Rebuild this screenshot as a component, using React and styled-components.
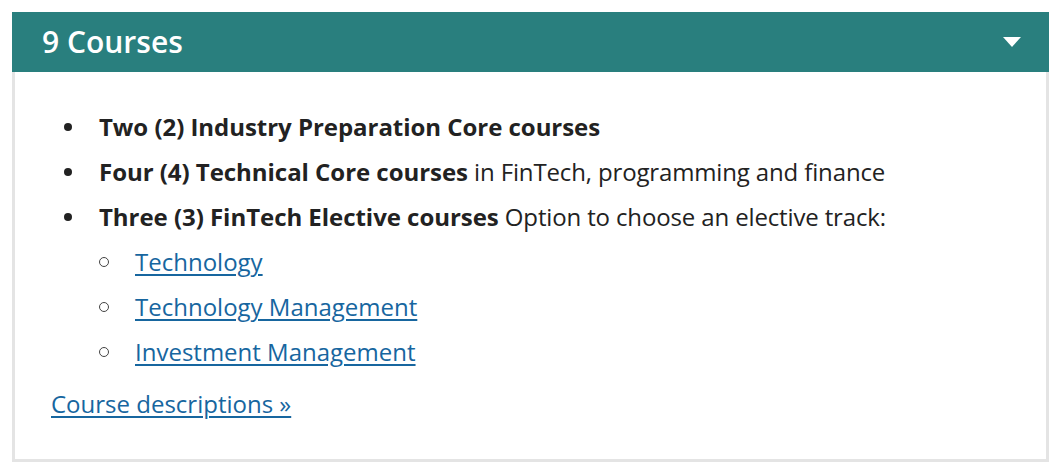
import React from 'react';
import styled, { createGlobalStyle } from 'styled-components';

const GlobalStyle = createGlobalStyle`
  body {
    margin: 0;
    background: #fff;
    font-family: "Open Sans", "Noto Sans", sans-serif;
    color: #222;
  }
`;

const Page = styled.div`
  padding: 12px 7px 0 12px;
`;

const Panel = styled.section`
  width: 1037px;
  box-sizing: border-box;
`;

const Header = styled.div`
  height: 60px;
  background: #297f7e;
  display: flex;
  align-items: center;
  justify-content: space-between;
  padding: 0 28px 0 30px;
  box-sizing: border-box;
`;

const Title = styled.h2`
  margin: 0;
  color: #fff;
  font-size: 30px;
  font-weight: 600;
  line-height: 1;
`;

const Caret = styled.span`
  width: 0;
  height: 0;
  border-left: 9px solid transparent;
  border-right: 9px solid transparent;
  border-top: 10px solid #fff;
`;

const Body = styled.div`
  border: 3px solid #e4e4e4;
  border-top: none;
  padding: 32px 36px 28px 36px;
  height: 390px;
  box-sizing: border-box;
`;

const List = styled.ul`
  margin: 0 0 15px 0;
  padding-left: ${p => (p.$nested ? '36px' : '48px')};
  list-style: none;
  font-size: 24px;
  line-height: 45px;
  letter-spacing: -0.14px;
`;

const Item = styled.li`
  position: relative;
  &::before {
    content: '';
    position: absolute;
    box-sizing: border-box;
    left: ${p => (p.$nested ? '-36px' : '-35px')};
    top: ${p => (p.$nested ? '18px' : '19px')};
    width: ${p => (p.$nested ? '10px' : '8px')};
    height: ${p => (p.$nested ? '10px' : '8px')};
    border-radius: 50%;
    background: ${p => (p.$nested ? 'transparent' : '#222')};
    border: ${p => (p.$nested ? '1.5px solid #444' : 'none')};
  }
`;

const Strong = styled.strong`
  font-weight: 700;
  letter-spacing: -0.04px;
`;

const Link = styled.a`
  color: #17669f;
  text-decoration: underline;
  text-decoration-thickness: 2px;
  text-underline-offset: 3px;
  font-size: 24px;
  line-height: 30px;
  letter-spacing: 0;
`;

const Footer = styled.p`
  margin: 0;
`;

export default function App() {
  return (
    <>
      <GlobalStyle />
      <Page>
        <Panel>
          <Header>
            <Title>9 Courses</Title>
            <Caret />
          </Header>
          <Body>
            <List>
              <Item><Strong>Two (2) Industry Preparation Core courses</Strong></Item>
              <Item><Strong>Four (4) Technical Core courses</Strong> in FinTech, programming and finance</Item>
              <Item>
                <Strong>Three (3) FinTech Elective courses</Strong> Option to choose an elective track:
                <List $nested>
                  <Item $nested><Link href="#">Technology</Link></Item>
                  <Item $nested><Link href="#">Technology Management</Link></Item>
                  <Item $nested><Link href="#">Investment Management</Link></Item>
                </List>
              </Item>
            </List>
            <Footer><Link href="#">Course descriptions »</Link></Footer>
          </Body>
        </Panel>
      </Page>
    </>
  );
}
